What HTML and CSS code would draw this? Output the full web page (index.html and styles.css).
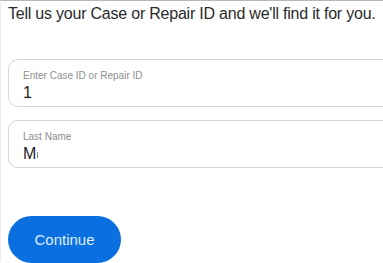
FILE: index.html
```html
<!DOCTYPE html>
<html>
<head>
<meta charset="utf-8">
<link rel="stylesheet" href="styles.css">
</head>
<body>
<div class="page">
  <h1 class="title">Tell us your Case or Repair ID and we'll find it for you.</h1>
  <div class="fields">
    <div class="field">
      <div class="label">Enter Case ID or Repair ID</div>
      <div class="value">1</div>
    </div>
    <div class="field">
      <div class="label">Last Name</div>
      <div class="value">M<span class="caret"></span></div>
    </div>
  </div>
  <button class="btn">Continue</button>
</div>
</body>
</html>
```
FILE: styles.css
```css
html, body {
  margin: 0;
  padding: 0;
  background: #fff;
  overflow: hidden;
}
body {
  width: 383px;
  height: 263px;
  font-family: "Liberation Sans", Arial, sans-serif;
}
.page {
  border-top: 1px solid #b8b8b8;
  border-left: 1px solid #ececec;
  height: 262px;
  box-sizing: border-box;
  padding-left: 7px;
}
.title {
  margin: 0;
  padding-top: 3px;
  font-size: 16px;
  letter-spacing: -0.22px;
  font-weight: normal;
  color: #2a2a2a;
  line-height: 20px;
  white-space: nowrap;
}
.fields {
  margin-top: 35px;
  display: flex;
  flex-direction: column;
  gap: 13px;
  margin-right: -20px;
}
.field {
  height: 48px;
  box-sizing: border-box;
  border: 1px solid #d6d6d6;
  border-radius: 10px;
  padding: 9px 14px 0;
}
.label {
  font-size: 10px;
  color: #8e8e8e;
  line-height: 13px;
}
.value {
  font-size: 16px;
  color: #1d1d1f;
  line-height: 20px;
  margin-top: 1px;
}
.caret {
  display: inline-block;
  width: 1px;
  height: 6px;
  background: #888;
  vertical-align: 1px;
  margin-left: 1px;
}
.btn {
  margin-top: 48px;
  width: 113px;
  height: 47px;
  border: none;
  border-radius: 24px;
  background: #0a70e0;
  color: #dfeeff;
  font-family: "Liberation Sans", Arial, sans-serif;
  font-size: 15px;
  padding: 0;
}
```
